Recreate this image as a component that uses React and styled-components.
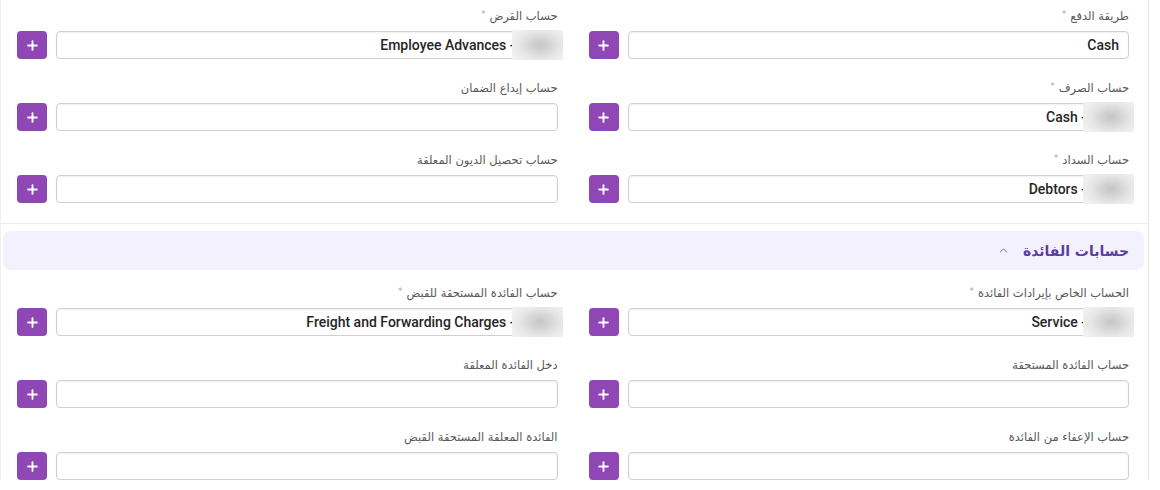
import React from "react";
import styled, { createGlobalStyle } from "styled-components";
import { Plus, ChevronUp } from "lucide-react";

const GlobalStyle = createGlobalStyle`
  body {
    margin: 0;
    background: #fff;
    font-family: "DejaVu Sans", "Liberation Sans", sans-serif;
  }
`;

const Card = styled.div`
  direction: rtl;
  width: 1149px;
  box-sizing: border-box;
  border-left: 1px solid #f0f0f0;
  border-right: 1px solid #e6e6e6;
  background: #fff;
`;

const Section = styled.div`
  padding: ${(props) => props.padTop || 7}px 19px ${(props) => props.padBottom || 0}px 16px;
  border-bottom: ${(props) => (props.divider ? "1px solid #ececec" : "none")};
`;

const Grid = styled.div`
  display: grid;
  grid-template-columns: 1fr 1fr;
  column-gap: 31px;
  row-gap: 20px;
`;

const Field = styled.div`
  display: flex;
  flex-direction: column;
`;

const Label = styled.label`
  height: 18px;
  line-height: 18px;
  margin-bottom: 6px;
  font-size: 11.5px;
  color: #585858;
  white-space: nowrap;
`;

const Required = styled.span`
  color: #a8a8a8;
  font-size: 9px;
  margin-right: 4px;
  vertical-align: top;
  line-height: 14px;
`;

const Row = styled.div`
  display: flex;
  align-items: center;
  gap: 9px;
`;

const Input = styled.div`
  position: relative;
  flex: 1;
  height: 28px;
  box-sizing: border-box;
  border: 1px solid #cfcfcf;
  border-radius: 4px;
  box-shadow: inset 0 1px 2px rgba(0, 0, 0, 0.06);
  background: #fff;
  display: flex;
  align-items: center;
  padding: 0 ${(props) => (props.masked ? 42 : 9)}px 0 9px;
`;

const Value = styled.span`
  direction: ltr;
  font-family: Roboto, "Liberation Sans", Arial, sans-serif;
  font-size: 14px;
  font-weight: 500;
  color: #262626;
  white-space: nowrap;
`;

// blurred account code tail on selected values
const CodeMask = styled.span`
  position: absolute;
  top: -2px;
  bottom: -2px;
  right: -6px;
  width: 51px;
  background: radial-gradient(
    ellipse 60% 70% at 55% 50%,
    #c6c6c6 0%,
    #d6d6d6 35%,
    #e6e6e6 65%,
    #f1f1f1 100%
  );
`;

const AddButton = styled.button`
  width: 30px;
  height: 28px;
  flex: none;
  border: none;
  border-radius: 4px;
  background: #8e47b5;
  color: #fff;
  display: flex;
  align-items: center;
  justify-content: center;
  padding: 0;
  cursor: pointer;
`;

const Header = styled.div`
  margin: 7px 4px 0 2px;
  height: 39px;
  border-radius: 8px;
  background: #f3f1fd;
  display: flex;
  align-items: center;
  gap: 13px;
  padding: 0 15px;
`;

const Title = styled.span`
  font-size: 14px;
  font-weight: 700;
  color: #5b3f9e;
`;

const Caret = styled.span`
  color: #6a6a6a;
  display: flex;
  align-items: center;
`;

const FormField = ({ label, required, value, masked }) => (
  <Field>
    <Label>
      {label}
      {required && <Required>*</Required>}
    </Label>
    <Row>
      <Input masked={masked}>
        {value && <Value>{masked ? `${value} -` : value}</Value>}
        {masked && <CodeMask />}
      </Input>
      <AddButton type="button">
        <Plus size={15} strokeWidth={3} />
      </AddButton>
    </Row>
  </Field>
);

const accounts = [
  { label: "طريقة الدفع", required: true, value: "Cash" },
  { label: "حساب القرض", required: true, value: "Employee Advances", masked: true },
  { label: "حساب الصرف", required: true, value: "Cash", masked: true },
  { label: "حساب إيداع الضمان" },
  { label: "حساب السداد", required: true, value: "Debtors", masked: true },
  { label: "حساب تحصيل الديون المعلقة" },
];

const interest = [
  { label: "الحساب الخاص بإيرادات الفائدة", required: true, value: "Service", masked: true },
  {
    label: "حساب الفائدة المستحقة للقبض",
    required: true,
    value: "Freight and Forwarding Charges",
    masked: true,
  },
  { label: "حساب الفائدة المستحقة" },
  { label: "دخل الفائدة المعلقة" },
  { label: "حساب الإعفاء من الفائدة" },
  { label: "الفائدة المعلقة المستحقة القبض" },
];

export default function App() {
  return (
    <>
      <GlobalStyle />
      <Card>
        <Section divider padTop={7} padBottom={20}>
          <Grid>
            {accounts.map((f, i) => (
              <FormField key={i} {...f} />
            ))}
          </Grid>
        </Section>
        <Header>
          <Title>حسابات الفائدة</Title>
          <Caret>
            <ChevronUp size={13} strokeWidth={1.6} />
          </Caret>
        </Header>
        <Section padTop={14}>
          <Grid>
            {interest.map((f, i) => (
              <FormField key={i} {...f} />
            ))}
          </Grid>
        </Section>
      </Card>
    </>
  );
}
